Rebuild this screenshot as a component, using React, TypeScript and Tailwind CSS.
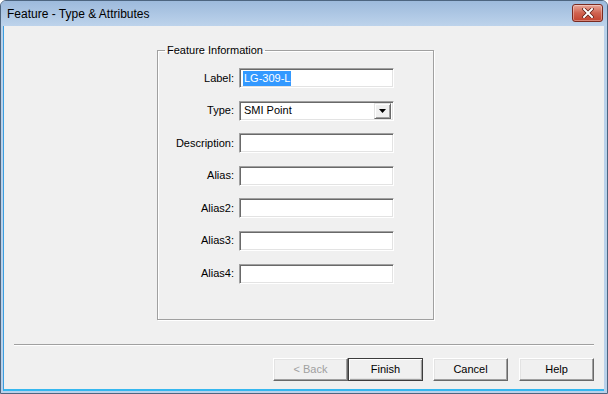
import React from 'react';

const fields = ['Description', 'Alias', 'Alias2', 'Alias3', 'Alias4'];

const sunken =
  'h-[20px] w-[155px] bg-white border border-t-[#a0a0a0] border-l-[#a0a0a0] border-b-white border-r-white shadow-[inset_1px_1px_0_#696969,inset_-1px_-1px_0_#e3e3e3]';

const Row: React.FC<{ label: string; children?: React.ReactNode }> = ({ label, children }) => (
  <div className="flex items-center h-[20px]">
    <span className="w-[77px] pr-[1px] text-right">{label}:</span>
    <div className="ml-[4px]">{children}</div>
  </div>
);

const WinButton: React.FC<{ label: string; isDefault?: boolean; disabled?: boolean }> = ({
  label,
  isDefault = false,
  disabled = false,
}) => (
  <button
    className={`w-[75px] h-[23px] flex items-center justify-center bg-[#f0f0f0] ${
      isDefault
        ? 'border border-[#3c3c3c] shadow-[inset_1px_1px_0_#fff,inset_-1px_-1px_0_#a0a0a0,inset_-2px_-2px_0_#e3e3e3]'
        : 'border border-t-white border-l-white border-b-[#696969] border-r-[#696969] shadow-[inset_-1px_-1px_0_#a0a0a0,inset_1px_1px_0_#e3e3e3]'
    } ${disabled ? 'text-[#a0a0a0]' : 'text-black'}`}
  >
    {label}
  </button>
);

export default function App() {
  return (
    <div
      className="w-[608px] h-[394px] flex flex-col bg-[#b9d1ea] border border-[#4d6580] rounded-t-[6px] overflow-hidden"
      style={{ fontFamily: '"Liberation Sans", Arial, sans-serif' }}
    >
      {/* title bar */}
      <div className="h-[25px] shrink-0 flex items-center justify-between pl-[6px] pr-[4px] bg-gradient-to-b from-[#9dbadc] to-[#bdd3eb]">
        <span className="text-[12px] text-black mt-[1px]">Feature - Type &amp; Attributes</span>
        <div className="w-[31px] h-[18px] mb-[2px] rounded-[3px] border border-[#7a2a20] bg-gradient-to-b from-[#e7a699] via-[#d0624f] to-[#c2412d] flex items-center justify-center shadow-[inset_0_0_0_1px_rgba(255,255,255,0.35)]">
          <svg width="12" height="10" viewBox="0 0 12 10">
            <path d="M2 1 L10 9 M10 1 L2 9" stroke="#5a1a12" strokeWidth="3.4" strokeLinecap="square" />
            <path d="M2 1 L10 9 M10 1 L2 9" stroke="#fff" strokeWidth="2" strokeLinecap="square" />
          </svg>
        </div>
      </div>

      {/* client area */}
      <div className="flex-1 flex flex-col ml-[2px] mr-[3px] mb-[2px] bg-[#f0f0f0] border-l border-[#3a9ee0] border-b-2 border-b-[#35b7ef] text-[11px] leading-[13px] text-black">
        <fieldset className="mt-[18px] ml-[153px] w-[277px] h-[276px] border border-[#a0a0a0] shadow-[1px_1px_0_#fff,inset_1px_1px_0_#fff] pt-[11px]">
          <legend className="ml-[7px] px-[2px]">Feature Information</legend>
          <div className="flex flex-col gap-[12.6px]">
            <Row label="Label">
              <div className={`${sunken} flex items-center pl-[3px]`}>
                <span className="bg-[#3399ff] text-white leading-[15px] px-[1px]">LG-309-L</span>
              </div>
            </Row>
            <Row label="Type">
              <div className={`${sunken} flex items-center justify-between pl-[4px] pr-[2px]`}>
                <span>SMI Point</span>
                <div className="w-[17px] h-[16px] bg-[#f0f0f0] border border-t-[#e3e3e3] border-l-[#e3e3e3] border-b-[#696969] border-r-[#696969] shadow-[inset_1px_1px_0_#fff,inset_-1px_-1px_0_#a0a0a0] flex items-center justify-center">
                  <svg width="7" height="4" viewBox="0 0 7 4">
                    <path d="M0 0 H7 L3.5 4 Z" fill="#000" />
                  </svg>
                </div>
              </div>
            </Row>
            {fields.map((f) => (
              <Row key={f} label={f}>
                <div className={sunken} />
              </Row>
            ))}
          </div>
        </fieldset>

        <div className="mt-auto mb-[8px] mx-[10px]">
          <div className="h-[2px] border-t border-[#a0a0a0] border-b border-b-white" />
          <div className="flex justify-end mt-[12px]">
            <WinButton label="< Back" disabled />
            <WinButton label="Finish" isDefault />
            <div className="ml-[10px]">
              <WinButton label="Cancel" />
            </div>
            <div className="ml-[11px]">
              <WinButton label="Help" />
            </div>
          </div>
        </div>
      </div>
    </div>
  );
}
